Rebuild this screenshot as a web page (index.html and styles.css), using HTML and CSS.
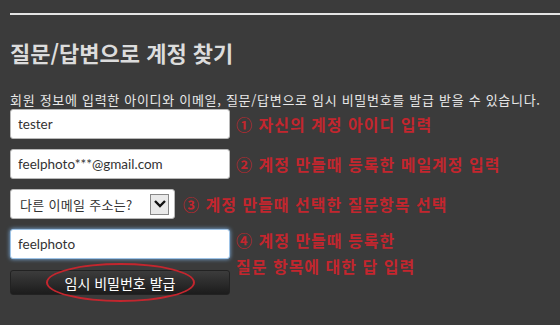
FILE: index.html
```html
<!DOCTYPE html>
<html lang="ko">
<head>
  <meta charset="UTF-8" />
  <title>질문/답변으로 계정 찾기</title>
  <link rel="stylesheet" href="styles.css">
</head>
<body>
  <div class="page">
    <div class="rule"></div>
    <h2 class="title">질문/답변으로 계정 찾기</h2>
    <p class="desc">회원 정보에 입력한 아이디와 이메일, 질문/답변으로 임시 비밀번호를 발급 받을 수 있습니다.</p>

    <div class="row">
      <input class="field" type="text" value="tester">
      <span class="note">① 자신의 계정 아이디 입력</span>
    </div>

    <div class="row">
      <input class="field" type="text" value="feelphoto***@gmail.com">
      <span class="note">② 계정 만들때 등록한 메일계정 입력</span>
    </div>

    <div class="row">
      <div class="select">
        <span class="select-text">다른 이메일 주소는?</span>
        <span class="select-btn">
          <svg width="14" height="10" viewBox="0 0 14 10"><path d="M2 2 L7 7 L12 2" fill="none" stroke="#111" stroke-width="2.4"/></svg>
        </span>
      </div>
      <span class="note note-select">③ 계정 만들때 선택한 질문항목 선택</span>
    </div>

    <div class="row last">
      <div class="col">
        <input class="field focus" type="text" value="feelphoto">
        <div class="btn-wrap">
          <button class="submit">임시 비밀번호 발급</button>
          <span class="circle"></span>
        </div>
      </div>
      <div class="note note-multi">
        <div>④ 계정 만들때 등록한</div>
        <div>질문 항목에 대한 답 입력</div>
      </div>
    </div>
  </div>
</body>
</html>
```

FILE: styles.css
```css
body {
  margin: 0;
  background: #3b3b3b;
  font-family: "Lato", "Noto Sans CJK KR", sans-serif;
  color: #e6e6e6;
}

.page {
  padding: 13px 0 0 10px;
}

.rule {
  height: 2px;
  background: #e4e4e4;
}

.title {
  margin: 0;
  padding-top: 21px;
  font-family: "Noto Sans CJK KR", sans-serif;
  font-size: 22px;
  line-height: 32px;
  font-weight: bold;
  color: #dcdcdc;
}

.desc {
  margin: 0;
  padding-top: 22px;
  font-family: "Noto Sans CJK KR", sans-serif;
  font-size: 13px;
  line-height: 19px;
  letter-spacing: 0.7px;
  color: #e8e8e8;
  white-space: nowrap;
}

.row {
  display: flex;
  align-items: center;
  gap: 6px;
  margin-bottom: 10px;
}

.field {
  box-sizing: border-box;
  width: 220px;
  height: 30px;
  margin: 0;
  padding: 0 7px;
  border: 1px solid #b8b8b8;
  border-radius: 3px;
  background: #fff;
  font-family: "Lato", "Noto Sans CJK KR", sans-serif;
  font-size: 13.5px;
  color: #333;
}

.field.focus {
  border-color: #9ec3e6;
  box-shadow: 0 0 4px #7fb4e8;
}

.note {
  font-family: "Noto Sans CJK KR", sans-serif;
  font-size: 16px;
  font-weight: bold;
  letter-spacing: 1px;
  color: #c3262e;
  white-space: nowrap;
}

.select {
  box-sizing: border-box;
  width: 165px;
  height: 30px;
  display: flex;
  align-items: center;
  justify-content: space-between;
  padding: 0 5px 0 9px;
  border: 1px solid #b8b8b8;
  border-radius: 3px;
  background: #fff;
}

.select-text {
  font-family: "Noto Sans CJK KR", sans-serif;
  font-size: 13px;
  letter-spacing: 0.3px;
  color: #333;
}

.select-btn {
  box-sizing: border-box;
  width: 19px;
  height: 21px;
  display: flex;
  align-items: center;
  justify-content: center;
  border: 1px solid #888;
  background: #e9e9e9;
}

.note-select {
  margin-left: 2px;
}

.last {
  align-items: flex-start;
}

.col {
  display: flex;
  flex-direction: column;
  gap: 11px;
}

.btn-wrap {
  position: relative;
}

.submit {
  display: block;
  width: 220px;
  height: 25px;
  margin: 0;
  padding: 0;
  border: 1px solid #222;
  border-radius: 3px;
  background: linear-gradient(#3c3c3c, #1c1c1c);
  font-family: "Noto Sans CJK KR", sans-serif;
  font-size: 14px;
  color: #fff;
}

.circle {
  position: absolute;
  left: 36px;
  top: -7px;
  width: 145px;
  height: 35px;
  border: 2px solid #c3262e;
  border-radius: 50%;
}

.note-multi {
  line-height: 26px;
  margin-top: -2px;
}
```
